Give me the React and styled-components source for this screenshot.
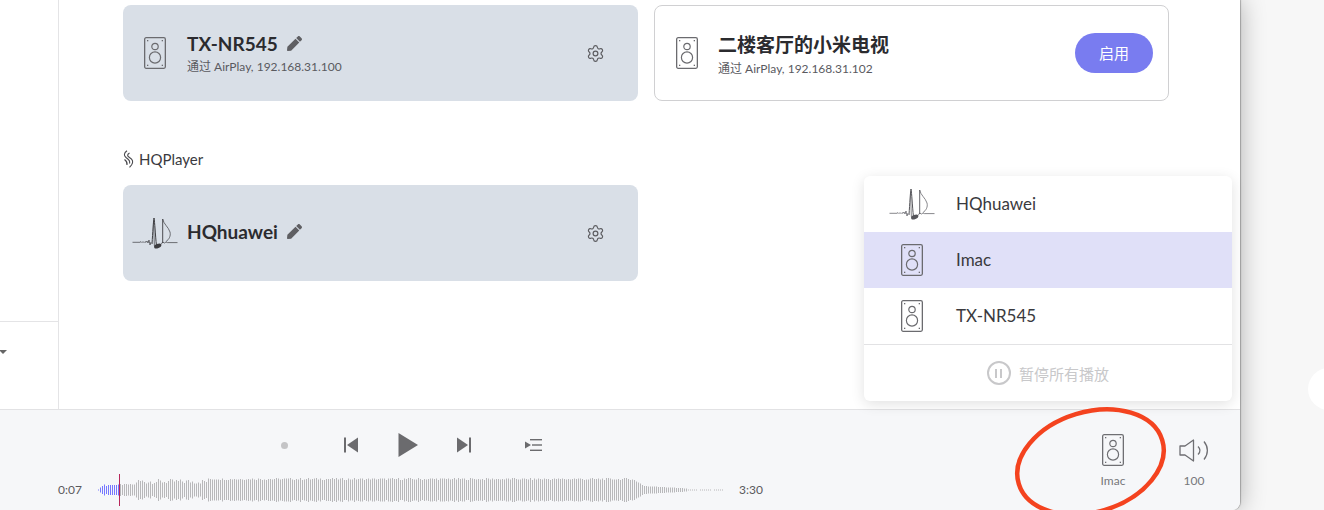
import React from "react";
import styled, { createGlobalStyle } from "styled-components";
import { Settings } from "lucide-react";
import { FaPen } from "react-icons/fa";

const GlobalStyle = createGlobalStyle`
  html, body {
    margin: 0;
    height: 100%;
    overflow: hidden;
    background: #f7f7f7;
  }
  #root {
    height: 100%;
  }
`;

const FONT = `Lato, "Noto Sans CJK SC", sans-serif`;

const Desktop = styled.div`
  position: relative;
  width: 1324px;
  height: 510px;
  font-family: ${FONT};
  overflow: hidden;
`;

const Knob = styled.div`
  position: absolute;
  left: 1308px;
  top: 368px;
  width: 42px;
  height: 42px;
  border-radius: 50%;
  background: #fff;
`;

const Window = styled.div`
  position: relative;
  width: 1240px;
  height: 510px;
  display: flex;
  flex-direction: column;
  background: #fff;
  border-bottom-right-radius: 8px;
  box-shadow: 1px 0 1px rgba(0, 0, 0, 0.25), 0 0 26px rgba(0, 0, 0, 0.3);
  overflow: hidden;
`;

const Main = styled.div`
  display: flex;
  height: 409px;
  flex: none;
`;

const Sidebar = styled.div`
  width: 58px;
  flex: none;
  display: flex;
  flex-direction: column;
  border-right: 1px solid #e4e4e6;
`;

const SidebarTop = styled.div`
  height: 321px;
  flex: none;
  border-bottom: 1px solid #e4e4e6;
`;

const SidebarBottom = styled.div`
  padding-top: 28px;
`;

const Caret = styled.div`
  width: 0;
  height: 0;
  border-left: 4px solid transparent;
  border-right: 4px solid transparent;
  border-top: 4px solid #666;
  margin-left: -1px;
`;

const Content = styled.div`
  flex: 1;
  padding: 5px 0 0 64px;
`;

const CardRow = styled.div`
  display: flex;
  gap: 16px;
`;

const Card = styled.div`
  box-sizing: border-box;
  width: 515px;
  height: 96px;
  border-radius: 8px;
  display: flex;
  align-items: center;
  background: ${(p) => (p.$active ? "#d9dfe7" : "#fff")};
  border: ${(p) => (p.$active ? "none" : "1px solid #d0d0d2")};
  padding: ${(p) => (p.$active ? "0 33px 0 0" : "0 15px 0 0")};
`;

const CardIcon = styled.div`
  width: ${(p) => (p.$active ? 64 : 63)}px;
  flex: none;
  display: flex;
  justify-content: center;
  color: #6b6b6f;
`;

const CardText = styled.div`
  flex: 1;
  min-width: 0;
  margin-top: ${(p) => p.$offset}px;
`;

const TitleRow = styled.div`
  display: flex;
  align-items: center;
  gap: 9px;
  height: 24px;
`;

const Title = styled.div`
  font-size: 19px;
  font-weight: 700;
  color: #2b2b2f;
  margin-top: ${(p) => (p.$active ? -2 : -4)}px;
`;

const Pen = styled(FaPen)`
  width: 15px;
  height: 15px;
  color: #5f5f63;
  margin-top: -2px;
`;

const Sub = styled.div`
  font-size: 12px;
  line-height: 14px;
  margin-top: ${(p) => (p.$active ? 4 : 5)}px;
  color: #5a5a5f;
`;

const Gear = styled(Settings)`
  width: 19px;
  height: 19px;
  color: #5c5c60;
  stroke-width: 1.5;
`;

const EnableButton = styled.button`
  width: 78px;
  height: 40px;
  border: none;
  border-radius: 20px;
  background: #797cf0;
  color: #fff;
  font-family: ${FONT};
  font-size: 15px;
  padding: 0 0 2px;
`;

const SectionLabel = styled.div`
  display: flex;
  align-items: center;
  gap: 5px;
  height: 20px;
  margin: 48px 0 16px -1px;
  font-size: 15px;
  color: #3a3a3e;
`;

const Player = styled.div`
  flex: 1;
  background: #f6f7f9;
  border-top: 1px solid #e2e2e4;
  display: flex;
  justify-content: space-between;
`;

const Center = styled.div`
  width: 780px;
  display: flex;
  flex-direction: column;
`;

const Transport = styled.div`
  height: 70px;
  padding-left: 281px;
  display: flex;
  align-items: center;
  color: #6b6b6e;
`;

const Dot = styled.div`
  width: 7px;
  height: 7px;
  border-radius: 50%;
  background: #c4c4c6;
  margin-right: 56px;
`;

const TransportIcon = styled.svg`
  flex: none;
  margin-right: ${(p) => p.$gap}px;
  fill: currentColor;
`;

const Timeline = styled.div`
  display: flex;
  align-items: center;
  padding-left: 58px;
  height: 32px;
  margin-top: -6px;
  font-size: 12px;
  color: #5a5a5e;
`;

const TimeLabel = styled.div`
  width: ${(p) => p.$width}px;
  flex: none;
  margin-top: -2px;
`;

const WaveWrap = styled.div`
  position: relative;
  width: 641px;
  flex: none;
  margin-left: -2px;
  height: 32px;
`;

const Playhead = styled.div`
  position: absolute;
  left: 21px;
  top: 0;
  width: 1px;
  height: 32px;
  background: #b8265a;
`;

const RightControls = styled.div`
  display: flex;
  gap: 31px;
  padding: 24px 21px 0 0;
`;

const Control = styled.div`
  width: 50px;
  display: flex;
  flex-direction: column;
  align-items: center;
  color: #6f6f73;
`;

const ControlIcon = styled.div`
  height: 32px;
  display: flex;
  align-items: center;
`;

const ControlLabel = styled.div`
  font-size: 12px;
  line-height: 14px;
  margin-top: 8px;
  color: #77777b;
`;

const Popup = styled.div`
  position: absolute;
  left: 864px;
  top: 176px;
  width: 368px;
  height: 225px;
  border-radius: 6px;
  background: #fff;
  box-shadow: 0 3px 14px rgba(0, 0, 0, 0.12);
  overflow: hidden;
`;

const PopupRow = styled.div`
  height: 56px;
  display: flex;
  align-items: center;
  background: ${(p) => (p.$selected ? "#e0e0f8" : "transparent")};
  color: #3a3a3e;
  font-size: 17px;
`;

const PopupIcon = styled.div`
  box-sizing: border-box;
  width: 92px;
  flex: none;
  padding-left: 4px;
  display: flex;
  justify-content: center;
  color: #6b6b6f;
`;

const PopupLabel = styled.span`
  padding-bottom: 1px;
`;

const PauseAll = styled.div`
  height: 56px;
  border-top: 1px solid #e2e2e4;
  display: flex;
  align-items: center;
  justify-content: center;
  gap: 8px;
  font-size: 15px;
  color: #c8c8ca;
`;

const PauseCircle = styled.div`
  box-sizing: border-box;
  width: 24px;
  height: 24px;
  border-radius: 50%;
  border: 2px solid #c8c8ca;
  display: flex;
  align-items: center;
  justify-content: center;
  gap: 3px;
`;

const PauseBar = styled.span`
  width: 2px;
  height: 9px;
  background: #c8c8ca;
`;

const Annotation = styled.svg`
  position: absolute;
  left: 1000px;
  top: 395px;
  pointer-events: none;
`;

const Speaker = () => (
  <svg width="22" height="32" viewBox="0 0 22 32" fill="none" stroke="currentColor">
    <rect x="0.65" y="0.65" width="20.7" height="30.7" rx="1.5" strokeWidth="1.3" />
    <circle cx="11" cy="9.5" r="3.2" strokeWidth="1.2" />
    <circle cx="11" cy="20.5" r="5.6" strokeWidth="1.2" />
    <g fill="currentColor" stroke="none">
      <rect x="3" y="3" width="1.3" height="1.3" />
      <rect x="17.7" y="3" width="1.3" height="1.3" />
      <rect x="3" y="27.7" width="1.3" height="1.3" />
      <rect x="17.7" y="27.7" width="1.3" height="1.3" />
    </g>
  </svg>
);

const HqLogo = ({ color = "#3c3c40" }) => (
  <svg width="46" height="34" viewBox="0 0 46 34" fill="none" stroke={color} strokeWidth="0.7">
    <path d="M0.5 26.3 H8 l1 -.7 l1 1 l1 -1 l1 1 l1 -1 l1 .8 l1 -1.4 l1 2 l1 -3 l1 5 l1 -3" />
    <path d="M20 28 C20.8 16 21.3 6 22 2 C22.8 6 23.2 18 24.5 30" strokeWidth="1" />
    <path d="M21.7 6 C21.8 14 22 22 22.4 30" strokeWidth="0.7" />
    <path d="M30.7 27 V3" strokeWidth="0.9" />
    <path d="M30.7 3 C31.5 8 36.5 11 38 16 C39 20 37 23.5 34 25.5" strokeWidth="0.7" />
    <ellipse cx="25.7" cy="30" rx="3.8" ry="2.2" fill={color} stroke="none" transform="rotate(-22 25.7 30)" />
    <path d="M29 28.5 l1.7 -2.5 l1.7 1 l1.6 -1 l1.4 .6 H45.5" />
  </svg>
);

const HqMark = () => (
  <svg width="12" height="18" viewBox="0 0 12 18" fill="none" stroke="#4a4a4e" strokeWidth="1.1">
    <path d="M5 0.8 C2 3 1.5 5.5 4 7.5 C7 9.5 8.5 11 7.5 13.5 M7.5 3 C5 4.5 5 6 7.5 7.5 C11 9.5 11.5 12 9.5 15 L7.5 17.3" />
    <path d="M2.5 9.5 C4.5 11 5.5 12.5 5 15" />
  </svg>
);

const rnd = (i) => {
  const v = Math.sin(i * 12.9898) * 43758.5453;
  return v - Math.floor(v);
};

const PLAYED = [1, 5, 8, 11, 8, 10, 10, 10, 10, 10, 11];

// fixed bar heights, shaped like the track's envelope
const bars = Array.from({ length: 313 }, (_, i) => {
  const x = i * 2;
  let h;
  if (i < PLAYED.length) h = PLAYED[i];
  else if (x < 38) h = 10 + rnd(i) * 2;
  else if (x < 110) h = 12 + rnd(i) * 10;
  else if (x < 535) h = 20 + rnd(i) * 4;
  else if (x < 545) h = 21 - ((x - 535) / 10) * 12;
  else if (x < 590) h = 8 - ((x - 545) / 45) * 5;
  else h = 1;
  return { x, h: Math.round(h) };
});

const Waveform = () => (
  <svg width="641" height="32" viewBox="0 0 641 32">
    {bars.map(({ x, h }) => {
      if (x > 590 && x % 14 > 10) return null;
      return (
        <rect
          key={x}
          x={x}
          y={16 - h / 2}
          width="1"
          height={h}
          fill={x < 21 ? "#7678ff" : "#b8b8ba"}
        />
      );
    })}
  </svg>
);

const SpeakerCard = ({ name, address, active, action, logo }) => (
  <Card $active={active}>
    <CardIcon $active={active}>{logo || <Speaker />}</CardIcon>
    <CardText $offset={address ? (active ? 0 : 3) : -2}>
      <TitleRow>
        <Title $active={active}>{name}</Title>
        {active && <Pen />}
      </TitleRow>
      {address && <Sub $active={active}>{address}</Sub>}
    </CardText>
    {action}
  </Card>
);

const App = () => (
  <Desktop>
    <GlobalStyle />
    <Knob />
    <Window>
      <Main>
        <Sidebar>
          <SidebarTop />
          <SidebarBottom>
            <Caret />
          </SidebarBottom>
        </Sidebar>
        <Content>
          <CardRow>
            <SpeakerCard
              active
              name="TX-NR545"
              address="通过 AirPlay, 192.168.31.100"
              action={<Gear />}
            />
            <SpeakerCard
              name="二楼客厅的小米电视"
              address="通过 AirPlay, 192.168.31.102"
              action={<EnableButton>启用</EnableButton>}
            />
          </CardRow>
          <SectionLabel>
            <HqMark />
            HQPlayer
          </SectionLabel>
          <SpeakerCard active name="HQhuawei" logo={<HqLogo />} action={<Gear />} />
        </Content>
      </Main>
      <Player>
        <Center>
          <Transport>
            <Dot />
            <TransportIcon $gap={40} width="14" height="16" viewBox="0 0 14 16">
              <rect x="0" y="0.5" width="2" height="15" />
              <path d="M14 0.5 V15.5 L3 8 Z" />
            </TransportIcon>
            <TransportIcon $gap={39} width="20" height="24" viewBox="0 0 20 24">
              <path d="M0.5 0 L20 12 L0.5 24 Z" />
            </TransportIcon>
            <TransportIcon $gap={54} width="14" height="16" viewBox="0 0 14 16">
              <path d="M0 0.5 V15.5 L11 8 Z" />
              <rect x="12" y="0.5" width="2" height="15" />
            </TransportIcon>
            <TransportIcon $gap={0} width="17" height="12" viewBox="0 0 17 12">
              <path d="M0 2.5 L6 6 L0 9.5 Z" />
              <rect x="5" y="0" width="12" height="1.4" />
              <rect x="7" y="5.3" width="10" height="1.4" />
              <rect x="5" y="10.6" width="12" height="1.4" />
            </TransportIcon>
          </Transport>
          <Timeline>
            <TimeLabel $width={42}>0:07</TimeLabel>
            <WaveWrap>
              <Waveform />
              <Playhead />
            </WaveWrap>
            <TimeLabel $width={40}>3:30</TimeLabel>
          </Timeline>
        </Center>
        <RightControls>
          <Control>
            <ControlIcon>
              <Speaker />
            </ControlIcon>
            <ControlLabel>Imac</ControlLabel>
          </Control>
          <Control>
            <ControlIcon>
              <svg width="30" height="23" viewBox="0 0 30 23" fill="none" stroke="currentColor" strokeWidth="1.3">
                <path d="M1 7 H6 L14.5 1 V22 L6 16 H1 Z" strokeLinejoin="round" />
                <path d="M19 7.5 C21.5 10 21.5 13 19 15.5" />
                <path d="M25 2.5 C29.5 8 29.5 15 25 20.5" />
              </svg>
            </ControlIcon>
            <ControlLabel>100</ControlLabel>
          </Control>
        </RightControls>
      </Player>
    </Window>
    <Popup>
      <PopupRow>
        <PopupIcon>
          <HqLogo color="#55555a" />
        </PopupIcon>
        <PopupLabel>HQhuawei</PopupLabel>
      </PopupRow>
      <PopupRow $selected>
        <PopupIcon>
          <Speaker />
        </PopupIcon>
        <PopupLabel>Imac</PopupLabel>
      </PopupRow>
      <PopupRow>
        <PopupIcon>
          <Speaker />
        </PopupIcon>
        <PopupLabel>TX-NR545</PopupLabel>
      </PopupRow>
      <PauseAll>
        <PauseCircle>
          <PauseBar />
          <PauseBar />
        </PauseCircle>
        暂停所有播放
      </PauseAll>
    </Popup>
    <Annotation width="324" height="115" viewBox="0 0 324 115" fill="none">
      <ellipse
        cx="90.5"
        cy="67"
        rx="75"
        ry="50"
        stroke="#f4431f"
        strokeWidth="4.5"
        transform="rotate(-17 90.5 67)"
      />
    </Annotation>
  </Desktop>
);

export default App;
